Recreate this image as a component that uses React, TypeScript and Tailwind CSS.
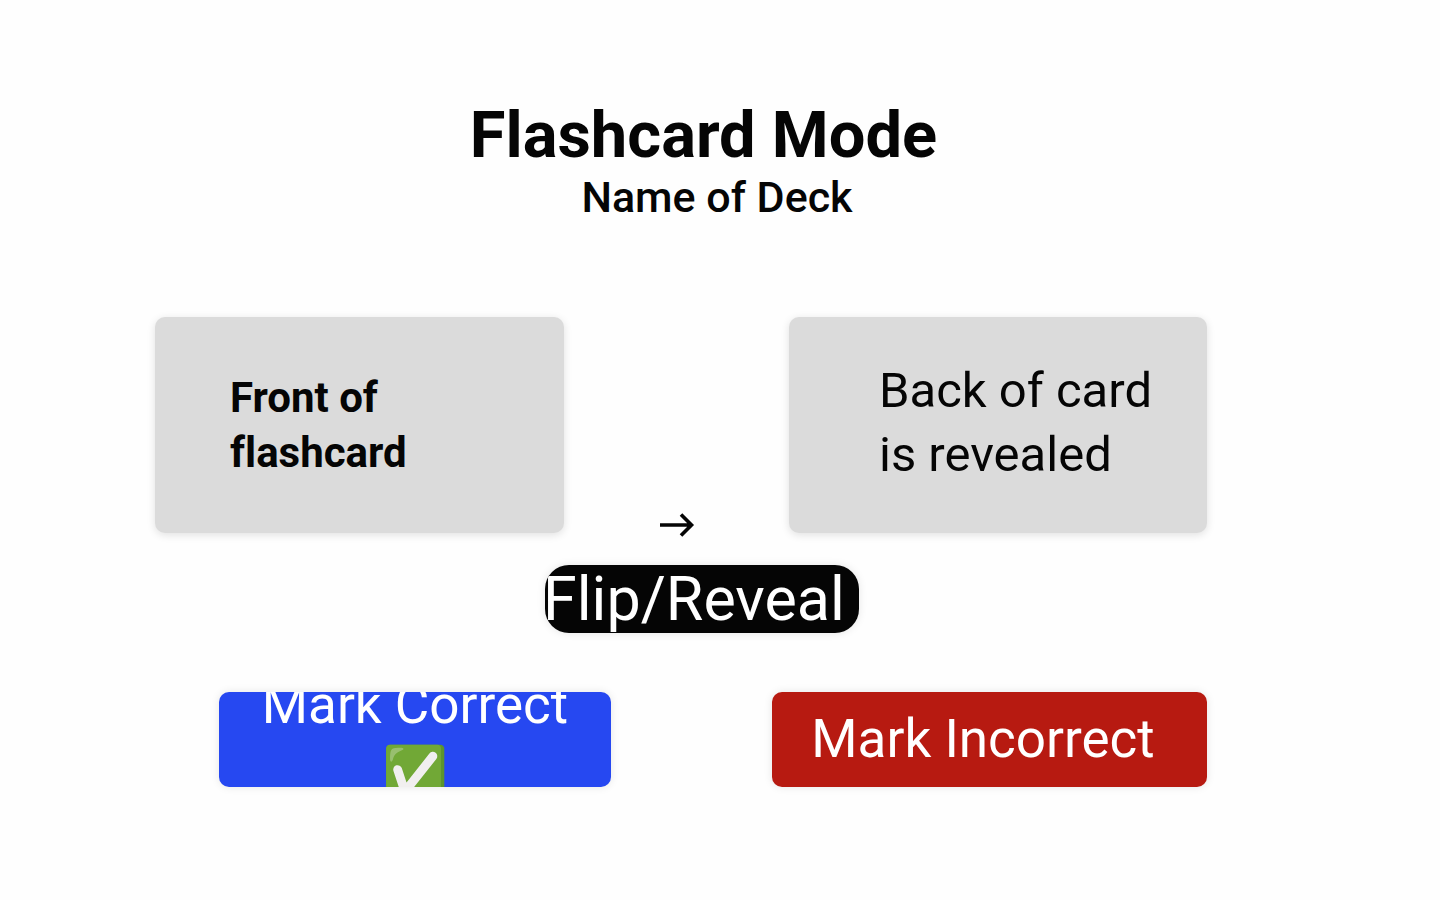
import type { ReactNode } from "react";

function Card({ className, children }: { className: string; children: ReactNode }) {
  return (
    <section
      className={`flex h-[216px] items-center rounded-[10px] bg-[#dbdbdb] shadow-[0_2px_8px_rgba(0,0,0,0.12)] ${className}`}
    >
      {children}
    </section>
  );
}

function MarkButton({ className, children }: { className: string; children: ReactNode }) {
  return (
    <button
      type="button"
      className={`flex h-[95px] items-center justify-center overflow-hidden rounded-[10px] text-center text-[53px] leading-[69px] text-white shadow-[0_0_8px_rgba(0,0,0,0.1)] ${className}`}
    >
      {children}
    </button>
  );
}

export default function App() {
  return (
    <main className="min-h-screen bg-[#fefefe] pt-24 pr-[233px] pb-24 pl-[155px] font-['Roboto',sans-serif] text-[#050505] [font-variant-ligatures:none]">
      <header className="flex flex-col items-center">
        <h1 className="pl-[45px] text-[65px] leading-[78px] font-bold">Flashcard Mode</h1>
        <h2 className="pl-[72px] text-[43px] leading-[46px] font-medium">Name of Deck</h2>
      </header>

      <div className="mt-[97px] flex items-end justify-between">
        <Card className="w-[409px] pl-[75px]">
          <p className="text-[42px] leading-[55px] font-bold">
            Front of
            <br />
            flashcard
          </p>
        </Card>
        <svg className="h-10 w-10 translate-y-3" viewBox="0 0 40 40" fill="none" stroke="#050505" strokeWidth="3.6" aria-hidden="true">
          <path d="M3 20H34M24 9.5L34.5 20L24 30.5" />
        </svg>
        <Card className="w-[418px] pb-1 pl-[90px]">
          <p className="text-[49px] leading-[64px]">
            Back of card
            <br />
            is revealed
          </p>
        </Card>
      </div>

      <div className="mt-8 flex justify-center pl-[42px]">
        <button
          type="button"
          className="h-[68px] w-[314px] overflow-hidden rounded-3xl bg-[#050505] text-left -indent-[2px] text-[61px] leading-[68px] whitespace-nowrap text-white shadow-[0_0_8px_rgba(0,0,0,0.1)]"
        >
          Flip/Reveal
        </button>
      </div>

      <div className="mt-[59px] flex justify-between pl-16">
        <MarkButton className="w-[392px] bg-[#2648f1]">
          <span>
            Mark Correct
            <br />
            <span className="brightness-[.92] contrast-[1.1]">✅</span>
          </span>
        </MarkButton>
        <MarkButton className="w-[435px] bg-[#b71a11] pr-[13px]">Mark Incorrect</MarkButton>
      </div>
    </main>
  );
}
